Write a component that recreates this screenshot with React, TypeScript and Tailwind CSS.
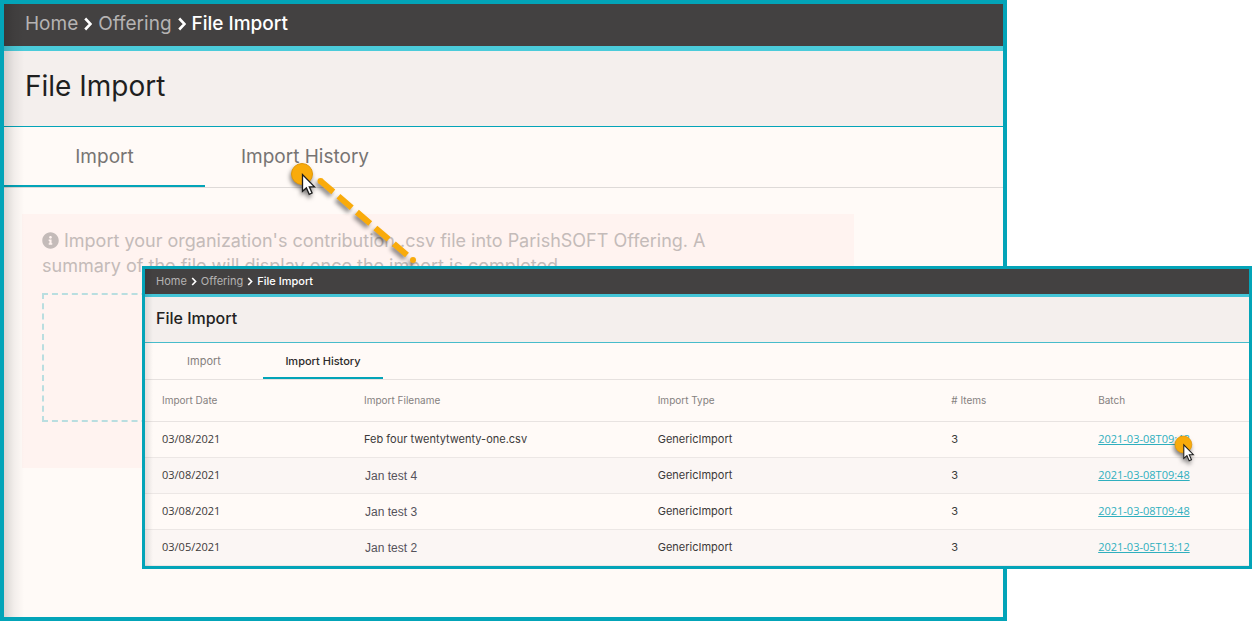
import { FaInfoCircle } from "react-icons/fa";

type ImportRow = {
  date: string;
  filename: string;
  type: string;
  items: number;
  batch: string;
  plain?: boolean;
};

const rows: ImportRow[] = [
  { date: "03/08/2021", filename: "Feb four twentytwenty-one.csv", type: "GenericImport", items: 3, batch: "2021-03-08T09:48" },
  { date: "03/08/2021", filename: "Jan test 4", type: "GenericImport", items: 3, batch: "2021-03-08T09:48", plain: true },
  { date: "03/08/2021", filename: "Jan test 3", type: "GenericImport", items: 3, batch: "2021-03-08T09:48", plain: true },
  { date: "03/05/2021", filename: "Jan test 2", type: "GenericImport", items: 3, batch: "2021-03-05T13:12", plain: true },
];

const columns = ["Import Date", "Import Filename", "Import Type", "# Items", "Batch"];

function Chevron({ className }: { className: string }) {
  return (
    <svg viewBox="0 0 8 14" className={className} aria-hidden="true">
      <path d="M1.2 1.5 6.5 7l-5.3 5.5" fill="none" stroke="#fff" strokeWidth="2.6" />
    </svg>
  );
}

function Breadcrumbs({ small = false }: { small?: boolean }) {
  const chevron = small ? "h-[9px] w-[6px]" : "h-[14px] w-2";

  return (
    <nav
      aria-label="Breadcrumb"
      className={
        small
          ? "flex h-7 items-center gap-1 border-b-[3px] border-[#43c5d7] bg-[#434141] px-[11px] text-[11px] text-[#b5b3b3]"
          : "flex h-[47px] items-center gap-[6px] border-b-[5px] border-[#4bcbda] bg-[#434141] px-[21px] pb-[2px] text-[19px] text-[#b5b3b3]"
      }
    >
      <a href="#home">Home</a>
      <Chevron className={chevron} />
      <a href="#offering">Offering</a>
      <Chevron className={chevron} />
      <span className="font-medium text-white">File Import</span>
    </nav>
  );
}

// Orange click marker with the mouse arrow on top of it
function ClickMarker({ className }: { className: string }) {
  return (
    <svg viewBox="0 0 30 36" className={`pointer-events-none absolute drop-shadow-[-1px_3px_2px_rgba(0,0,0,0.5)] ${className}`} aria-hidden="true">
      <circle cx="13" cy="13" r="10.5" fill="#f9ab0b" stroke="#e0980a" />
      <path
        d="M13.5 13.5v16.8l3.9-3.4 2.8 6.4 2.9-1.3-2.8-6.2h5.2z"
        fill="#fff"
        stroke="#1c1c1c"
        strokeWidth="1.3"
      />
    </svg>
  );
}

function ImportWindow() {
  return (
    <section className="relative mr-[245px] min-h-screen border-4 border-[#03a4b8] bg-[#fffaf7]">
      <Breadcrumbs />
      <header className="flex h-[76px] items-center border-b border-[#03a4b8] bg-[#f4efed] px-[21px] pb-[6px]">
        <h1 className="text-[28px] text-[#1f1f1f]">File Import</h1>
      </header>
      <div role="tablist" className="flex h-[61px] border-b border-[#dedad8] text-[19px] text-[#777473]">
        <button type="button" role="tab" aria-selected="true" className="w-[201px] border-b-2 border-[#03a4b8] pt-[2px]">
          Import
        </button>
        <button type="button" role="tab" aria-selected="false" className="w-[200px] border-b-2 border-transparent pt-[2px]">
          Import History
        </button>
      </div>

      <div className="mt-[26px] mr-[149px] ml-[18px] h-[254px] bg-[#fff3f0] px-5 pt-[14px]">
        <p className="pr-[90px] text-[18px] leading-[25px] text-[#c4bbb9]">
          <FaInfoCircle className="mr-[5px] inline-block size-[17px] align-[-2px]" aria-hidden="true" />
          Import your organization's contribution .csv file into ParishSOFT Offering. A summary of the file will display
          once the import is completed.
        </p>
        <button
          type="button"
          aria-label="Choose a file to import"
          className="mt-[15px] block h-[129px] w-full border-2 border-dashed border-[#b9dee0]"
        />
      </div>

      <div className="pointer-events-none absolute inset-y-0 left-0 w-5 bg-gradient-to-r from-black/15 via-black/5 to-transparent" />
    </section>
  );
}

function HistoryWindow() {
  return (
    <section className="absolute top-[266px] right-0 left-[142px] border-[3px] border-[#03a4b8] bg-[#fffaf7]">
      <Breadcrumbs small />
      <header className="flex h-[46px] items-center border-b border-[#47bccb] bg-[#f4efed] px-[11px] pb-[3px]">
        <h2 className="text-[16px] font-medium text-[#222]">File Import</h2>
      </header>
      <div role="tablist" className="flex h-[37px] border-b border-[#e6e1df] text-[11px]">
        <button type="button" role="tab" aria-selected="false" className="w-[118px] border-b-2 border-transparent pt-[2px] text-[#85807e]">
          Import
        </button>
        <button type="button" role="tab" aria-selected="true" className="w-[120px] border-b-2 border-[#03a4b8] pt-[2px] font-medium text-[#2c2a2a]">
          Import History
        </button>
      </div>

      <table className="w-full table-fixed border-separate border-spacing-0 text-left text-[11px]">
        <colgroup>
          <col className="w-[18.3%]" />
          <col className="w-[26.6%]" />
          <col className="w-[26.6%]" />
          <col className="w-[13.3%]" />
          <col className="w-[15.2%]" />
        </colgroup>
        <thead>
          <tr className="h-[42px] text-[10px] text-[#858180]">
            {columns.map((column) => (
              <th key={column} scope="col" className="border-b border-[#e8e3e1] p-0 pl-[17px] font-normal">
                {column}
              </th>
            ))}
          </tr>
        </thead>
        <tbody>
          {rows.map((row) => (
            <tr key={row.filename} className="h-9 text-[#3b3939] even:bg-[#fbf6f4]">
              <td className="border-b border-[#ece7e5] pl-[17px] font-['Open_Sans',sans-serif]">{row.date}</td>
              <td
                className={
                  row.plain
                    ? "border-b border-[#ece7e5] pl-[18px] font-['Liberation_Sans',sans-serif] text-[12px] text-[#55525a]"
                    : "border-b border-[#ece7e5] pl-[17px]"
                }
              >
                {row.filename}
              </td>
              <td className="border-b border-[#ece7e5] pl-[17px]">{row.type}</td>
              <td className="border-b border-[#ece7e5] pl-[17px]">{row.items}</td>
              <td className="border-b border-[#ece7e5] pl-[17px] font-['Open_Sans',sans-serif]">
                <a href="#batch" className="text-[#2fafbe] underline">
                  {row.batch}
                </a>
              </td>
            </tr>
          ))}
        </tbody>
      </table>

      <div className="pointer-events-none absolute inset-y-0 left-0 w-2 bg-gradient-to-r from-black/10 to-transparent" />
      <ClickMarker className="top-[165px] right-[52px] h-[29px] w-6" />
    </section>
  );
}

export default function App() {
  return (
    <main className="relative min-h-screen bg-white font-['Inter',sans-serif]">
      <ImportWindow />
      <svg
        viewBox="0 0 110 100"
        className="pointer-events-none absolute top-[170px] left-[310px] h-[100px] w-[110px] drop-shadow-[-2px_3px_2px_rgba(0,0,0,0.45)]"
        aria-hidden="true"
      >
        <path d="M10 10.500 97 85" fill="none" stroke="#f9ab0b" strokeWidth="6" strokeDasharray="17.5 6.8" />
        <circle cx="10.500" cy="11" r="3" fill="#f9ab0b" />
        <circle cx="103" cy="90" r="3" fill="#f9ab0b" />
      </svg>
      <ClickMarker className="top-[161px] left-[289px] h-9 w-[30px]" />
      <HistoryWindow />
    </main>
  );
}
